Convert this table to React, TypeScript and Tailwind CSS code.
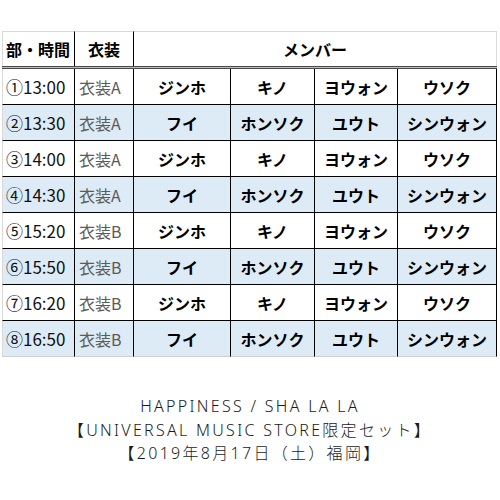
import React from "react";

const rows = [
  { t: "①13:00", c: "衣装A", m: ["ジンホ", "キノ", "ヨウォン", "ウソク"], blue: false },
  { t: "②13:30", c: "衣装A", m: ["フイ", "ホンソク", "ユウト", "シンウォン"], blue: true },
  { t: "③14:00", c: "衣装A", m: ["ジンホ", "キノ", "ヨウォン", "ウソク"], blue: false },
  { t: "④14:30", c: "衣装A", m: ["フイ", "ホンソク", "ユウト", "シンウォン"], blue: true },
  { t: "⑤15:20", c: "衣装B", m: ["ジンホ", "キノ", "ヨウォン", "ウソク"], blue: false },
  { t: "⑥15:50", c: "衣装B", m: ["フイ", "ホンソク", "ユウト", "シンウォン"], blue: true },
  { t: "⑦16:20", c: "衣装B", m: ["ジンホ", "キノ", "ヨウォン", "ウソク"], blue: false },
  { t: "⑧16:50", c: "衣装B", m: ["フイ", "ホンソク", "ユウト", "シンウォン"], blue: true },
];

const memberW = ["w-[97px]", "w-[84px]", "w-[83px]", "w-[99px]"];

export default function App() {
  return (
    <div className="w-[500px] h-[500px] bg-white overflow-hidden" style={{ fontFamily: '"Noto Sans CJK JP", "Noto Sans", sans-serif' }}>
      <div className="ml-[2px] mt-[31px] w-[495px]">
        <div className="flex h-[35px] text-[16px] font-bold text-black">
          <div className="w-[73px] border-l border-t border-r border-l-[#d9d9d9] border-t-[#d9d9d9] border-r-black flex items-center pl-[3px]">部・時間</div>
          <div className="w-[59px] border-t border-r border-t-[#d9d9d9] border-r-black flex items-center justify-center">衣装</div>
          <div className="flex-1 border-t border-r border-[#d9d9d9] flex items-center justify-center">メンバー</div>
        </div>
        <div className="h-[3px] border-y border-[#4a4a4a] bg-[#bdbdbd]" />
        {rows.map((r, i) => {
          const last = i === rows.length - 1;
          const bg = r.blue ? "bg-[#ddebf7]" : "bg-white";
          const bb = last ? "border-b-[#cfcfcf]" : "border-b-black";
          return (
            <div key={i} className={`flex h-[36px] ${bg}`}>
              <div className={`w-[73px] border-l border-r border-b border-l-[#d9d9d9] border-r-black ${bb} flex items-center pl-[3px] text-[17px] text-[#111]`}>{r.t}</div>
              <div className={`w-[59px] border-r border-b border-r-black ${bb} flex items-center pl-[4px] text-[16px] text-[#5e5a55]`}>{r.c}</div>
              {r.m.map((m, j) => (
                <div key={j} className={`${memberW[j]} border-r border-b border-r-black ${bb} flex items-center justify-center text-[16px] font-bold text-black`}>{m}</div>
              ))}
            </div>
          );
        })}
      </div>
      <div className="mt-[38px] flex flex-col items-center text-[16px] leading-[23.5px] tracking-[2.3px] text-[#1a1a1a] font-light" style={{ fontFamily: '"Noto Sans", "Noto Sans CJK JP", sans-serif' }}>
        <div>HAPPINESS / SHA LA LA</div>
        <div>【UNIVERSAL MUSIC STORE限定セット】</div>
        <div>【2019年8月17日（土）福岡】</div>
      </div>
    </div>
  );
}
